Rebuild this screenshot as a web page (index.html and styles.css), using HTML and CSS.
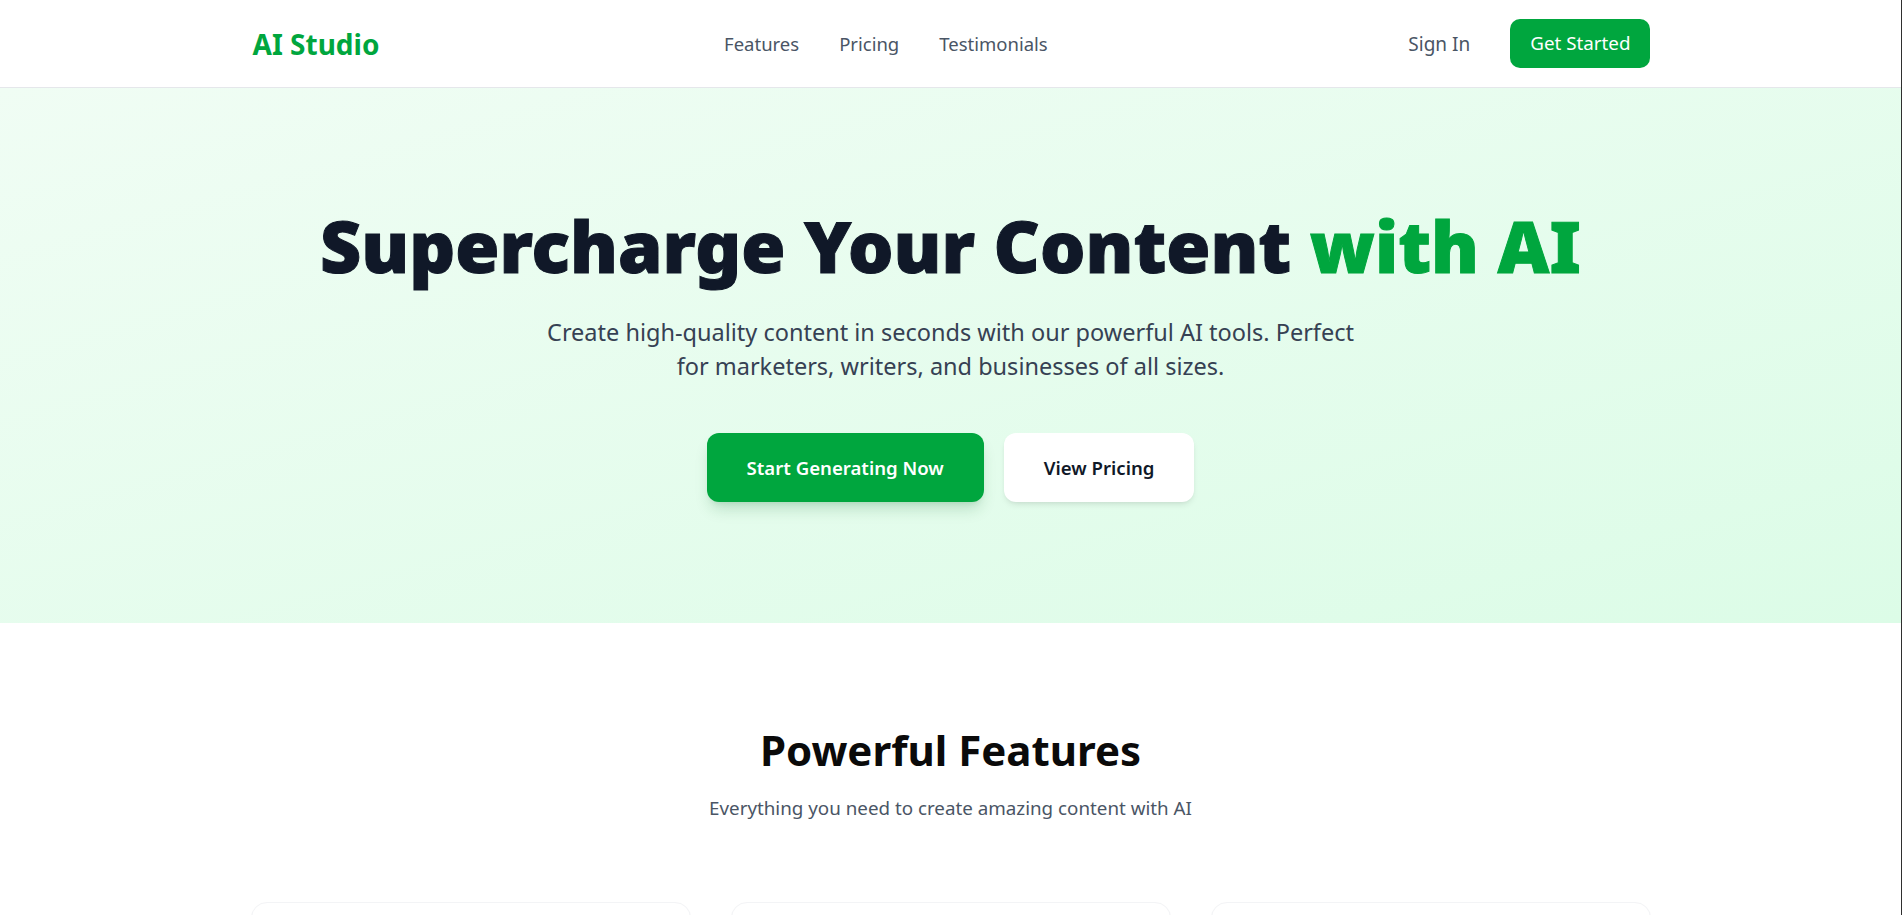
FILE: index.html
```html
<!DOCTYPE html>
<html lang="en">
<head>
<meta charset="utf-8">
<title>AI Studio</title>
<link rel="stylesheet" href="styles.css">
</head>
<body>
<header class="site-header">
  <div class="container header-inner">
    <a class="logo" href="#">AI Studio</a>
    <nav class="main-nav">
      <a href="#features">Features</a>
      <a href="#pricing">Pricing</a>
      <a href="#testimonials">Testimonials</a>
    </nav>
    <div class="header-actions">
      <a class="sign-in" href="#">Sign In</a>
      <a class="btn-small" href="#">Get Started</a>
    </div>
  </div>
</header>

<section class="hero">
  <h1 class="hero-title">Supercharge Your Content <span class="accent">with AI</span></h1>
  <p class="hero-sub">Create high-quality content in seconds with our powerful AI tools. Perfect for marketers, writers, and businesses of all sizes.</p>
  <div class="hero-actions">
    <a class="btn btn-primary" href="#">Start Generating Now</a>
    <a class="btn btn-white" href="#pricing">View Pricing</a>
  </div>
</section>

<section class="features" id="features">
  <h2 class="section-title">Powerful Features</h2>
  <p class="section-sub">Everything you need to create amazing content with AI</p>
  <div class="container cards">
    <div class="card">
      <div class="card-icon"></div>
      <h3>Blog Post Generator</h3>
      <p>Create engaging, SEO-optimized blog posts in minutes.</p>
    </div>
    <div class="card">
      <div class="card-icon"></div>
      <h3>Social Media Content</h3>
      <p>Generate posts tailored for every platform.</p>
    </div>
    <div class="card">
      <div class="card-icon"></div>
      <h3>Marketing Copy</h3>
      <p>Write compelling ads, emails and landing pages.</p>
    </div>
  </div>
</section>
</body>
</html>
```

FILE: styles.css
```css
* { box-sizing: border-box; }

html {
  border-right: 1px solid #2f2f2f;
}

body {
  margin: 0;
  font-family: "Noto Sans", "Open Sans", sans-serif;
  color: #111827;
  background: #ffffff;
}

a { text-decoration: none; color: inherit; }

.container {
  max-width: 1400px;
  margin: 0 auto;
}

.site-header {
  background: #ffffff;
  border-bottom: 1px solid #e5e7eb;
}

.header-inner {
  height: 87px;
  display: flex;
  align-items: center;
  justify-content: space-between;
}

.logo {
  font-size: 28px;
  font-weight: 700;
  color: #00a63e;
  padding-left: 2px;
}

.main-nav {
  display: flex;
  gap: 40px;
  font-size: 18.5px;
  color: #4a5565;
  margin-right: 16px;
}

.header-actions {
  display: flex;
  align-items: center;
  gap: 40px;
}

.sign-in {
  font-size: 19px;
  color: #4a5565;
}

.btn-small {
  background: #00a63e;
  color: #ffffff;
  font-size: 18.8px;
  line-height: 29px;
  padding: 10px 20px;
  border-radius: 10px;
}

.hero {
  background: linear-gradient(to bottom right, #f0fdf4, #dcfce7);
  padding: 122px 20px 121px;
  text-align: center;
}

.hero-title {
  margin: 0;
  font-size: 71.5px;
  line-height: 72px;
  font-weight: 900;
  color: #101828;
  -webkit-text-stroke: 1px currentColor;
}

.accent { color: #00a63e; }

.hero-sub {
  margin: 33px auto 0;
  max-width: 820px;
  font-size: 23.5px;
  line-height: 34px;
  color: #364153;
}

.hero-actions {
  margin-top: 50px;
  display: flex;
  justify-content: center;
  gap: 20px;
}

.btn {
  font-size: 18.6px;
  line-height: 29px;
  font-weight: 600;
  padding: 20px 40px;
  border-radius: 12px;
}

.btn-primary {
  background: #00a63e;
  color: #ffffff;
  box-shadow: 0 10px 15px -3px rgba(0, 100, 40, 0.18), 0 4px 6px -4px rgba(0, 100, 40, 0.15);
}

.btn-white {
  background: #ffffff;
  color: #101828;
  box-shadow: 0 4px 6px -1px rgba(0, 0, 0, 0.08), 0 2px 4px -2px rgba(0, 0, 0, 0.08);
}

.features {
  padding: 104px 0 96px;
  text-align: center;
  background: #ffffff;
}

.section-title {
  margin: 0;
  font-size: 42px;
  line-height: 45px;
  font-weight: 700;
  color: #0a0a0a;
}

.section-sub {
  margin: 22px 0 0;
  font-size: 18.8px;
  line-height: 28px;
  color: #4a5565;
}

.cards {
  margin-top: 80px;
  display: grid;
  grid-template-columns: repeat(3, 1fr);
  gap: 40px;
  text-align: left;
}

.card {
  background: #ffffff;
  border: 1px solid #f3f4f6;
  border-radius: 16px;
  padding: 32px;
  min-height: 260px;
  box-shadow: 0 1px 2px rgba(0, 0, 0, 0.03);
}

.card-icon {
  width: 48px;
  height: 48px;
  border-radius: 10px;
  background: #dcfce7;
  margin-bottom: 20px;
}

.card h3 {
  margin: 0 0 10px;
  font-size: 22px;
}

.card p {
  margin: 0;
  color: #4a5565;
  font-size: 17px;
}
```
